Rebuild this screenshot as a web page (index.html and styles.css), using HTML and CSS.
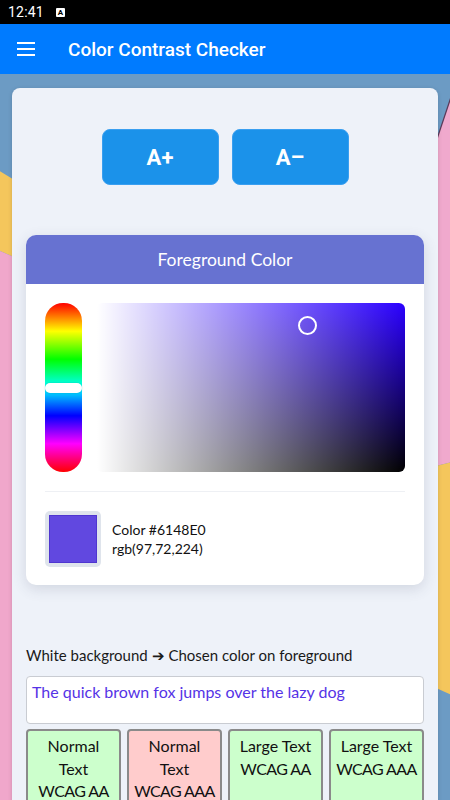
FILE: index.html
```html
<!DOCTYPE html>
<html>
<head>
<meta charset="utf-8">
<link rel="stylesheet" href="styles.css">
</head>
<body>
<div class="status">
  <span class="time">12:41</span>
  <span class="status-icon">A</span>
</div>
<header class="appbar">
  <span class="menu"><i></i><i></i><i></i></span>
  <span class="title">Color Contrast Checker</span>
</header>
<main class="main">
  <svg class="bg" viewBox="0 74 450 726" preserveAspectRatio="none">
    <rect x="0" y="74" width="450" height="726" fill="#6c9bc4"/>
    <polygon points="-2,170 16,181 16,258 -2,250" fill="#f4c65c"/>
    <polygon points="-2,250 16,258 16,800 -2,800" fill="#f0a7cb"/>
    <polygon points="436,142 452,94 452,462 436,466" fill="#f0a9cd"/>
    <line x1="436" y1="142" x2="452" y2="94" stroke="#5a3a5a" stroke-width="1.2"/>
    <polygon points="436,466 452,462 452,695 436,688" fill="#f4c65c"/>
  </svg>
  <section class="card">
    <div class="fontbtns">
      <button class="fbtn">A+</button>
      <button class="fbtn">A&#8211;</button>
    </div>
    <div class="panel">
      <div class="panel-head">Foreground Color</div>
      <div class="panel-body">
        <div class="picker">
          <div class="hue"><span class="hue-thumb"></span></div>
          <div class="sv"><span class="sv-marker"></span></div>
        </div>
        <div class="divider"></div>
        <div class="selected">
          <div class="swatch"><div class="swatch-fill"></div></div>
          <div class="sel-text">
            <div>Color #6148E0</div>
            <div>rgb(97,72,224)</div>
          </div>
        </div>
      </div>
    </div>
    <p class="desc">White background &#10132; Chosen color on foreground</p>
    <div class="sample">The quick brown fox jumps over the lazy dog</div>
    <div class="results">
      <div class="res pass">Normal Text <span class="lvl">WCAG AA</span></div>
      <div class="res fail">Normal Text <span class="lvl">WCAG AAA</span></div>
      <div class="res pass">Large Text <span class="lvl">WCAG AA</span></div>
      <div class="res pass">Large Text <span class="lvl">WCAG AAA</span></div>
    </div>
  </section>
</main>
</body>
</html>
```

FILE: styles.css
```css
* { box-sizing: border-box; }
html, body { margin: 0; padding: 0; }
body {
  width: 450px;
  height: 800px;
  overflow: hidden;
  font-family: Lato, "Noto Sans", sans-serif;
  background: #6c9bc4;
}
.status {
  height: 24px;
  background: #000;
  display: flex;
  align-items: center;
  padding-left: 8px;
  gap: 12px;
}
.time {
  color: #fff;
  font-family: Roboto, sans-serif;
  font-size: 14px;
  letter-spacing: 0.2px;
}
.status-icon {
  width: 9px;
  height: 9px;
  background: #fff;
  border-radius: 1px;
  color: #000;
  font-family: Roboto, sans-serif;
  font-weight: 700;
  font-size: 8px;
  line-height: 9px;
  text-align: center;
}
.appbar {
  height: 50px;
  background: #007bff;
  display: flex;
  align-items: center;
  padding-left: 17px;
}
.menu {
  width: 18px;
  display: flex;
  flex-direction: column;
  gap: 4px;
  margin-right: 33px;
}
.menu i {
  display: block;
  height: 2px;
  background: #fff;
}
.title {
  color: #fff;
  font-family: Roboto, sans-serif;
  font-weight: 500;
  font-size: 19px;
}
.main {
  position: relative;
  height: 726px;
  overflow: hidden;
  padding: 14px 12px 0;
}
.bg {
  position: absolute;
  left: 0;
  top: 0;
  width: 450px;
  height: 726px;
}
.card {
  position: relative;
  background: #eef2f9;
  border-radius: 8px;
  padding: 41px 14px 0;
  height: 760px;
  box-shadow: 0 1px 4px rgba(0,0,0,0.15);
}
.fontbtns {
  display: flex;
  justify-content: center;
  gap: 13px;
}
.fbtn {
  width: 117px;
  height: 56px;
  border-radius: 8px;
  border: 1px solid #3a9ff0;
  background: #1b92ea;
  color: #fff;
  font-family: Roboto, sans-serif;
  font-weight: 700;
  font-size: 22px;
  padding: 0;
}
.panel {
  margin-top: 50px;
  background: #fff;
  border-radius: 10px;
  box-shadow: 0 4px 14px rgba(60,70,100,0.16);
  overflow: hidden;
}
.panel-head {
  height: 49px;
  background: #6772d1;
  color: #fff;
  font-size: 17.5px;
  display: flex;
  align-items: center;
  justify-content: center;
  padding-bottom: 1px;
}
.panel-body {
  padding: 19px 19px 18px;
}
.picker {
  display: flex;
  gap: 15px;
  height: 169px;
}
.hue {
  position: relative;
  width: 37px;
  border-radius: 18px;
  background: linear-gradient(to bottom, #f00 0%, #ff0 16.7%, #0f0 33.3%, #0ff 50%, #00f 66.7%, #f0f 83.3%, #f00 100%);
}
.hue-thumb {
  position: absolute;
  left: 0;
  right: 0;
  top: 80px;
  height: 10px;
  background: #fff;
  border-radius: 5px;
  box-shadow: 0 0 2px rgba(0,0,0,0.2);
}
.sv {
  position: relative;
  flex: 1;
  border-radius: 6px;
  background:
    linear-gradient(to right, #fff, rgba(255,255,255,0)),
    linear-gradient(to top, #000, rgba(0,0,0,0)),
    hsl(250, 100%, 50%);
}
.sv-marker {
  position: absolute;
  left: 201px;
  top: 13px;
  width: 19px;
  height: 19px;
  border: 2px solid #fff;
  border-radius: 50%;
}
.divider {
  margin-top: 19px;
  height: 1px;
  background: #eef0f4;
}
.selected {
  margin-top: 19px;
  display: flex;
  align-items: center;
  gap: 11px;
}
.swatch {
  width: 56px;
  height: 56px;
  padding: 4px;
  background: #dfe4ec;
  border-radius: 5px;
}
.swatch-fill {
  width: 48px;
  height: 48px;
  background: #6148e0;
  border: 1px solid #4f36d0;
}
.sel-text {
  font-size: 14px;
  line-height: 19px;
  color: #111;
}
.desc {
  margin: 60px 0 0;
  font-size: 15px;
  line-height: 20px;
  color: #1a1a1a;
}
.sample {
  margin-top: 11px;
  height: 48px;
  background: #fff;
  border: 1px solid #c9ccd2;
  border-radius: 4px;
  padding: 4px 5px;
  color: #5533e6;
  font-size: 16px;
  line-height: 22px;
}
.results {
  margin-top: 5px;
  display: grid;
  grid-template-columns: repeat(4, 1fr);
  gap: 6px;
}
.res {
  border: 2px solid #8a8a8a;
  border-radius: 4px;
  padding: 4px 4px;
  height: 90px;
  text-align: center;
  font-size: 16px;
  line-height: 22.5px;
  color: #111;
}
.lvl {
  white-space: nowrap;
  letter-spacing: -0.6px;
}
.pass { background: #ccffcc; }
.fail { background: #ffcccc; }
```
